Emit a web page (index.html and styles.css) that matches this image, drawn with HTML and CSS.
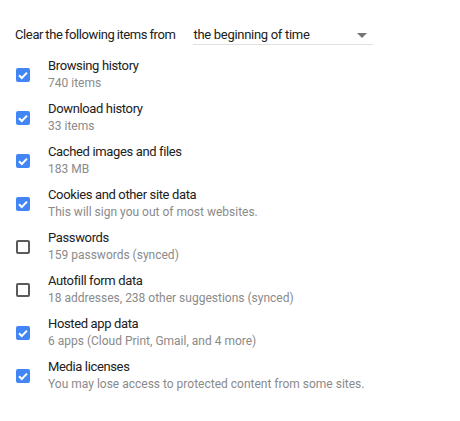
FILE: index.html
```html
<!DOCTYPE html>
<html>
<head>
<meta charset="utf-8">
<link rel="stylesheet" href="styles.css">
</head>
<body>
<div class="page">
  <div class="header">
    <span class="header-label">Clear the following items from</span>
    <div class="select">
      <span class="select-value">the beginning of time</span>
      <span class="select-arrow"></span>
    </div>
  </div>
  <div class="list">
    <div class="row">
      <span class="box checked"><svg viewBox="0 0 14 14" class="tick"><path d="M3 7.2 L5.8 10 L11 4.6" /></svg></span>
      <div class="text"><div class="title">Browsing history</div><div class="sub">740 items</div></div>
    </div>
    <div class="row">
      <span class="box checked"><svg viewBox="0 0 14 14" class="tick"><path d="M3 7.2 L5.8 10 L11 4.6" /></svg></span>
      <div class="text"><div class="title">Download history</div><div class="sub">33 items</div></div>
    </div>
    <div class="row">
      <span class="box checked"><svg viewBox="0 0 14 14" class="tick"><path d="M3 7.2 L5.8 10 L11 4.6" /></svg></span>
      <div class="text"><div class="title">Cached images and files</div><div class="sub">183 MB</div></div>
    </div>
    <div class="row">
      <span class="box checked"><svg viewBox="0 0 14 14" class="tick"><path d="M3 7.2 L5.8 10 L11 4.6" /></svg></span>
      <div class="text"><div class="title">Cookies and other site data</div><div class="sub">This will sign you out of most websites.</div></div>
    </div>
    <div class="row">
      <span class="box"></span>
      <div class="text"><div class="title">Passwords</div><div class="sub">159 passwords (synced)</div></div>
    </div>
    <div class="row">
      <span class="box"></span>
      <div class="text"><div class="title">Autofill form data</div><div class="sub">18 addresses, 238 other suggestions (synced)</div></div>
    </div>
    <div class="row">
      <span class="box checked"><svg viewBox="0 0 14 14" class="tick"><path d="M3 7.2 L5.8 10 L11 4.6" /></svg></span>
      <div class="text"><div class="title">Hosted app data</div><div class="sub">6 apps (Cloud Print, Gmail, and 4 more)</div></div>
    </div>
    <div class="row">
      <span class="box checked"><svg viewBox="0 0 14 14" class="tick"><path d="M3 7.2 L5.8 10 L11 4.6" /></svg></span>
      <div class="text"><div class="title">Media licenses</div><div class="sub">You may lose access to protected content from some sites.</div></div>
    </div>
  </div>
</div>
</body>
</html>
```
FILE: styles.css
```css
html, body {
  margin: 0;
  padding: 0;
  background: #ffffff;
}
body {
  font-family: Roboto, "Liberation Sans", Arial, sans-serif;
  color: #333333;
  width: 460px;
  height: 421px;
  overflow: hidden;
}
.page {
  padding: 26px 0 0 15px;
}
.header {
  display: flex;
  align-items: flex-start;
  gap: 17px;
  height: 19px;
}
.header-label {
  font-size: 13px;
  line-height: 18px;
  color: #212121;
  letter-spacing: -0.38px;
  word-spacing: -0.6px;
}
.select {
  width: 179px;
  height: 18px;
  border-bottom: 1px solid #e0e0e0;
  display: flex;
  align-items: flex-start;
  justify-content: space-between;
  box-sizing: content-box;
  padding-left: 1px;
}
.select-value {
  font-size: 13px;
  line-height: 18px;
  color: #212121;
  letter-spacing: -0.3px;
}
.select-arrow {
  width: 0;
  height: 0;
  border-left: 5px solid transparent;
  border-right: 5px solid transparent;
  border-top: 5px solid #757575;
  margin-right: 6px;
  margin-top: 7px;
}
.list {
  margin-top: 12px;
  display: flex;
  flex-direction: column;
  gap: 8px;
}
.row {
  display: flex;
  align-items: center;
  height: 35px;
}
.box {
  width: 14px;
  height: 14px;
  box-sizing: border-box;
  border: 2px solid #5a5a5a;
  border-radius: 2px;
  margin-left: 1px;
  margin-right: 18px;
  flex: none;
  position: relative;
}
.box.checked {
  background: #4285f4;
  border-color: #4285f4;
}
.tick {
  position: absolute;
  left: -2px;
  top: -2px;
  width: 14px;
  height: 14px;
}
.tick path {
  fill: none;
  stroke: #ffffff;
  stroke-width: 2;
}
.text {
  display: flex;
  flex-direction: column;
}
.title {
  font-size: 13px;
  line-height: 18px;
  color: #212121;
  letter-spacing: -0.36px;
}
.sub {
  font-size: 12px;
  line-height: 17px;
  color: #8a8a8a;
}
```
